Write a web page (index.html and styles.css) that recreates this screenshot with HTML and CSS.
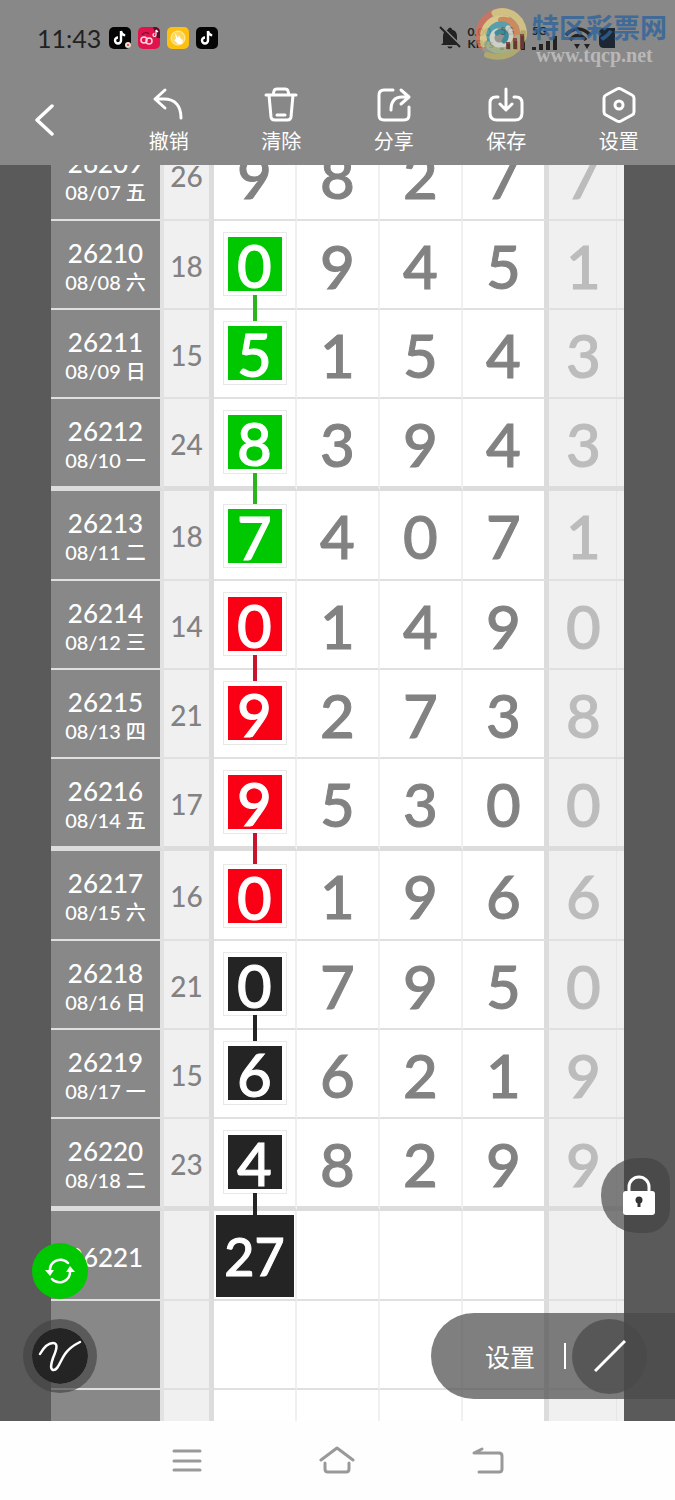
FILE: index.html
```html
<!DOCTYPE html>
<html lang="zh-CN">
<head>
    <meta charset="UTF-8">
    <meta name="viewport" content="width=device-width, initial-scale=1.0">
    <title>走势图</title>
    <link rel="stylesheet" href="styles.css">
</head>
<body>
    <header>
        <div class="status-bar">
            <span class="time">11:43</span>
            <div class="apps">
                <svg width="22" height="22" viewBox="0 0 22 22"><rect width="22" height="22" rx="5" fill="#050505"/><path d="M12 4v9.500a3 3 0 1 1-3-3M12 4c.4 2.500 2 4 4.200 4.200" fill="none" stroke="#fff" stroke-width="2.400"/><circle cx="19" cy="18" r="3" fill="#f3ddd0"/><circle cx="19" cy="18" r="1" fill="#c33"/></svg>
                <svg width="22" height="22" viewBox="0 0 22 22"><rect width="22" height="22" rx="5" fill="#e0134c"/><path d="M15 0h2a5 5 0 0 1 5 5v6h-3z" fill="#5d0d2a"/><circle cx="6" cy="13" r="3" fill="none" stroke="#ffd5df" stroke-width="1.500"/><circle cx="11" cy="14" r="3" fill="none" stroke="#ffd5df" stroke-width="1.500"/><path d="M4 8c2-3 5-3 7-1" fill="none" stroke="#8d0a34" stroke-width="1.500"/><path d="M18 3v5a1.500 1.500 0 1 1-1.500-1.500M18 3l2 2" fill="none" stroke="#fff" stroke-width="1.200"/></svg>
                <svg width="22" height="22" viewBox="0 0 22 22"><rect width="22" height="22" rx="5" fill="#fdc010"/><circle cx="11" cy="11" r="7" fill="#ffd65c" stroke="#fff0b0" stroke-width="1"/><path d="M8 6l3 5 1-3 2 4 2 1-1 4h-4l-4-4 2-1z" fill="#fff"/></svg>
                <svg width="22" height="22" viewBox="0 0 22 22"><rect width="22" height="22" rx="5" fill="#050505"/><path d="M12 4v9.500a3 3 0 1 1-3-3M12 4c.4 2.500 2 4 4.200 4.200" fill="none" stroke="#fff" stroke-width="2.400"/></svg>
            </div>
            <div class="signals">
                <svg width="22" height="24" viewBox="0 0 22 24"><path d="M4 17V10a7 7 0 0 1 5-6.500C9 1 13 1 13 3.500A7 7 0 0 1 18 10v7l2 2H2zM8.500 20.500h5a2.500 2 0 0 1-5 0z" fill="#222"/><path d="M2 0l20 20" stroke="#888" stroke-width="2"/><path d="M1 1l20 20" stroke="#222" stroke-width="2"/></svg>
                <span class="speed">0.00<br>KB/s</span>
                <span class="cell-signal">5G<svg width="26" height="14" viewBox="0 0 26 14"><path d="M2 14v-3M9 14V8M16 14V5M23 14V0" stroke="#222" stroke-width="4"/></svg></span>
                <span class="cell-signal">5G<svg width="26" height="14" viewBox="0 0 26 14"><path d="M2 14v-3M9 14V8M16 14V5M23 14V0" stroke="#222" stroke-width="4"/></svg></span>
                <svg width="28" height="24" viewBox="0 0 28 24"><path d="M2 9c7-8 17-8 24 0M6 14c5-6 11-6 16 0" fill="none" stroke="#222" stroke-width="3.500"/><path d="M10 18h6l-3 5zM20 18h6l-3 5z" fill="#222"/></svg>
                <svg width="17" height="24" viewBox="0 0 17 24"><path d="M17 2v20H6q-5 0-5-5V7q0-5 5-5z" fill="#1c2733"/></svg>
            </div>
            <div class="watermark">
                <svg width="52" height="54" viewBox="0 0 52 54">
                    <circle cx="26" cy="27" r="24" fill="#a9a596" fill-opacity=".6"/>
                    <g fill="none" stroke-linecap="round">
                        <path d="M6 38C-2 18 12 2 29 3" stroke="#d9705a" stroke-width="6"/>
                        <path d="M20 5c15-6 31 8 28 24" stroke="#e3cf82" stroke-width="7"/>
                        <path d="M48 25c0 17-17 28-36 22" stroke="#b9b267" stroke-width="6"/>
                        <path d="M9 36C6 18 18 8 31 11" stroke="#ecd98a" stroke-width="7"/>
                        <path d="M26 12c14-2 20 14 12 23" stroke="#e08a55" stroke-width="6"/>
                        <path d="M43 30c-4 12-21 17-31 6" stroke="#a8bb8a" stroke-width="7"/>
                        <path d="M15 31c-3-10 7-18 17-13" stroke="#4ba5b5" stroke-width="6"/>
                        <path d="M33 20c7 8 0 18-9 17s-9-12-2-14" stroke="#dfe3d6" stroke-width="5"/>
                        <path d="M22 25c6-5 13 2 7 8" stroke="#2f8c9e" stroke-width="5"/>
                    </g>
                    <path d="M33 41V34M40 41V30M47 41V26" stroke="#7e3b34" stroke-width="4"/>
                </svg>
                <div class="watermark-text">
                    <b>特区彩票网</b>
                    <span>www.tqcp.net</span>
                </div>
            </div>
        </div>
        <div class="toolbar">
            <button class="back" aria-label="返回">
                <svg width="20" height="32" viewBox="0 0 20 32"><path d="M17 2L2 16l15 14" fill="none" stroke="#fff" stroke-width="3.500" stroke-linecap="round" stroke-linejoin="round"/></svg>
            </button>
            <button>
                <svg class="icon" viewBox="0 0 36 36"><path d="M14 3L4 12l10 9M4 12h9c11 0 17 7 17 19" /></svg>
                撤销
            </button>
            <button>
                <svg class="icon" viewBox="0 0 36 36"><path d="M3 8h30M6 8l2 22q.5 3 3.500 3h13q3 0 3.500-3L30 8M10 8l1-4q.5-2 3-2h8q2.500 0 3 2l1 4M14 28h8"/></svg>
                清除
            </button>
            <button>
                <svg class="icon" viewBox="0 0 36 36"><path d="M17 3H8q-5 0-5 5v20q0 5 5 5h20q5 0 5-5v-8M15 23c0-8 3-13 11-13h6M25 3l8 7-8 7"/></svg>
                分享
            </button>
            <button>
                <svg class="icon" viewBox="0 0 36 36"><path d="M10 10H8q-6 0-6 6v10q0 7 7 7h18q7 0 7-7V16q0-6-6-6h-2M18 2v21M12 17l6 6 6-6"/></svg>
                保存
            </button>
            <button>
                <svg class="icon" viewBox="0 0 36 36"><path d="M16 2q2-1 4 0l11 6q2 1 2 3v14q0 2-2 3l-11 6q-2 1-4 0L5 28q-2-1-2-3V11q0-2 2-3z"/><circle cx="18" cy="18" r="4"/></svg>
                设置
            </button>
        </div>
    </header>

    <main>
        <table>
            <colgroup>
                <col class="col-issue">
                <col class="col-sum">
                <col class="col-num">
                <col class="col-num">
                <col class="col-num">
                <col class="col-num-end">
                <col class="col-tail">
            </colgroup>
            <tbody>
                <tr class="first"><th scope="row">26209<small>08/07 五</small></th><td class="sum">26</td><td>9</td><td>8</td><td>2</td><td class="last">7</td><td class="tail">7</td></tr>
                <tr><th scope="row">26210<small>08/08 六</small></th><td class="sum">18</td><td class="marked"><span class="mark green link">0</span></td><td>9</td><td>4</td><td class="last">5</td><td class="tail">1</td></tr>
                <tr><th scope="row">26211<small>08/09 日</small></th><td class="sum">15</td><td class="marked"><span class="mark green">5</span></td><td>1</td><td>5</td><td class="last">4</td><td class="tail">3</td></tr>
                <tr class="group-end"><th scope="row">26212<small>08/10 一</small></th><td class="sum">24</td><td class="marked"><span class="mark green link">8</span></td><td>3</td><td>9</td><td class="last">4</td><td class="tail">3</td></tr>
                <tr class="first"><th scope="row">26213<small>08/11 二</small></th><td class="sum">18</td><td class="marked"><span class="mark green">7</span></td><td>4</td><td>0</td><td class="last">7</td><td class="tail">1</td></tr>
                <tr><th scope="row">26214<small>08/12 三</small></th><td class="sum">14</td><td class="marked"><span class="mark red link">0</span></td><td>1</td><td>4</td><td class="last">9</td><td class="tail">0</td></tr>
                <tr><th scope="row">26215<small>08/13 四</small></th><td class="sum">21</td><td class="marked"><span class="mark red">9</span></td><td>2</td><td>7</td><td class="last">3</td><td class="tail">8</td></tr>
                <tr class="group-end"><th scope="row">26216<small>08/14 五</small></th><td class="sum">17</td><td class="marked"><span class="mark red link">9</span></td><td>5</td><td>3</td><td class="last">0</td><td class="tail">0</td></tr>
                <tr class="first"><th scope="row">26217<small>08/15 六</small></th><td class="sum">16</td><td class="marked"><span class="mark red">0</span></td><td>1</td><td>9</td><td class="last">6</td><td class="tail">6</td></tr>
                <tr><th scope="row">26218<small>08/16 日</small></th><td class="sum">21</td><td class="marked"><span class="mark black link">0</span></td><td>7</td><td>9</td><td class="last">5</td><td class="tail">0</td></tr>
                <tr><th scope="row">26219<small>08/17 一</small></th><td class="sum">15</td><td class="marked"><span class="mark black">6</span></td><td>6</td><td>2</td><td class="last">1</td><td class="tail">9</td></tr>
                <tr class="group-end"><th scope="row">26220<small>08/18 二</small></th><td class="sum">23</td><td class="marked"><span class="mark black link to-pick">4</span></td><td>8</td><td>2</td><td class="last">9</td><td class="tail">9</td></tr>
                <tr class="first"><th scope="row">26221</th><td class="sum"></td><td><span class="pick">27</span></td><td></td><td></td><td class="last"></td><td class="tail"></td></tr>
                <tr><th></th><td class="sum"></td><td></td><td></td><td></td><td class="last"></td><td class="tail"></td></tr>
                <tr><th></th><td class="sum"></td><td></td><td></td><td></td><td class="last"></td><td class="tail"></td></tr>
            </tbody>
        </table>

        <button class="float lock" aria-label="锁定">
            <svg width="34" height="42" viewBox="0 0 34 42"><path d="M7 17v-5a10 10 0 0 1 20 0v5" fill="none" stroke="#fff" stroke-width="3"/><rect x="1" y="16" width="32" height="24" rx="3" fill="#fff"/><circle cx="17" cy="25" r="3.500" fill="#333"/><path d="M17 25v7" stroke="#333" stroke-width="3"/></svg>
        </button>
        <button class="float refresh" aria-label="刷新">
            <svg width="30" height="26" viewBox="0 0 30 26"><path d="M5 13A10.500 10.500 0 0 1 23 5M25 13A10.500 10.500 0 0 1 7 21" fill="none" stroke="#fff" stroke-width="2.500" stroke-linecap="round"/><path d="M0 12h9l-4 6zM21 14h9l-5-6z" fill="#fff"/></svg>
        </button>
        <button class="float pen" aria-label="画笔">
            <svg width="44" height="32" viewBox="0 0 44 32"><path d="M2 14C6 7 11 3 15 3c6 0 3 8 0 15-2 6-3 11 0 12 5 1 7-9 12-16C31 8 36 5 42 2" fill="none" stroke="#fff" stroke-width="2.500" stroke-linecap="round"/></svg>
        </button>
        <div class="float draw-bar">
            <button class="draw-settings">设置</button>
            <span class="divider"></span>
            <button class="line-tool" aria-label="直线">
                <svg width="32" height="32" viewBox="0 0 32 32"><path d="M1 31L31 1" stroke="#fff" stroke-width="3"/></svg>
            </button>
        </div>
    </main>

    <nav>
        <button aria-label="菜单"><svg width="36" height="32" viewBox="0 0 36 32"><path d="M5 6h26M5 16h26M5 25h26"/></svg></button>
        <button aria-label="主页"><svg width="36" height="32" viewBox="0 0 36 32"><path d="M2 15L18 3l16 12M6 18v6q0 3 3 3h18q3 0 3-3v-6"/></svg></button>
        <button aria-label="返回"><svg width="36" height="32" viewBox="0 0 36 32"><path d="M12 4L4 8h25q3 0 3 3v13q0 3-3 3H9"/></svg></button>
    </nav>
</body>
</html>
```
FILE: styles.css
```css
* {
    box-sizing: border-box;
}
body {
    margin: 0;
    height: 100vh;
    display: flex;
    flex-direction: column;
    background-color: #5a5a5a;
    font-family: Lato, "Noto Sans CJK SC", sans-serif;
    overflow: hidden;
}
button {
    border: none;
    padding: 0;
    background: none;
    color: #fff;
    font-family: inherit;
    cursor: pointer;
}

/* header */
header {
    flex: none;
    background-color: #888;
}
.status-bar {
    position: relative;
    display: flex;
    align-items: center;
    height: 75px;
    padding: 0 60px 0 37px;
    color: #222;
}
.time {
    font-size: 25px;
}
.apps {
    display: flex;
    gap: 7px;
    margin-left: 8px;
}
.signals {
    display: flex;
    align-items: center;
    gap: 6px;
    margin-left: auto;
}
.speed {
    font-size: 12px;
    line-height: 12px;
    font-weight: bold;
}
.cell-signal {
    display: flex;
    flex-direction: column;
    font-size: 11px;
    line-height: 10px;
    font-weight: bold;
}
.watermark {
    position: absolute;
    top: 8px;
    right: 8px;
    display: flex;
    gap: 5px;
    opacity: 0.8;
}
.watermark-text {
    display: flex;
    flex-direction: column;
}
.watermark-text b {
    font-size: 27px;
    line-height: 36px;
    padding-top: 2px;
    color: #2f649c;
}
.watermark-text span {
    padding-left: 4px;
    font: bold 20px/18px "Liberation Serif", serif;
    color: #c4c4c4;
}
.toolbar {
    display: grid;
    grid-template-columns: repeat(6, 1fr);
    height: 90px;
}
.toolbar button {
    display: flex;
    flex-direction: column;
    align-items: center;
    gap: 4px;
    padding-top: 12px;
    font-size: 20px;
    line-height: 28px;
}
.toolbar .back {
    align-items: flex-start;
    justify-content: center;
    padding: 0 0 0 35px;
}
.icon {
    width: 36px;
    height: 36px;
    fill: none;
    stroke: #fff;
    stroke-width: 3;
    stroke-linecap: round;
    stroke-linejoin: round;
}

/* chart */
main {
    position: relative;
    flex: 1;
    min-height: 0;
    overflow: hidden;
    padding: 0 51px;
}
table {
    width: 100%;
    margin-top: -34px;
    table-layout: fixed;
    border-collapse: separate;
    border-spacing: 0;
    background-color: #fff;
}
.col-issue {
    width: 113px;
}
.col-sum {
    width: 50px;
}
.col-num {
    width: 83px;
}
.col-num-end {
    width: 86px;
}
.col-tail {
    width: 75px;
}
tr {
    height: 89px;
}
tr.first {
    height: 90px;
}
tr.group-end {
    height: 92px;
}
th,
td {
    padding: 2px 0 0;
    text-align: center;
    vertical-align: middle;
    border-bottom: 2px solid #e0e0e0;
}
.group-end th,
.group-end td {
    border-bottom: 5px solid #dcdcdc;
}
th {
    padding-top: 4px;
    background-color: #888;
    border-right: 4px solid #e2e2e2;
    color: #fff;
    font-size: 26px;
    line-height: 30px;
    font-weight: 500;
}
th small {
    display: block;
    font-size: 20px;
    line-height: 28px;
    font-weight: 500;
}
td {
    border-right: 2px solid #f0f0f0;
    color: #828282;
    font-size: 60px;
    line-height: 64px;
    font-weight: 500;
    -webkit-text-stroke: 1px;
}
.sum {
    background-color: #f0f0f0;
    border-right: 5px solid #dcdcdc;
    font-size: 28px;
    -webkit-text-stroke: 0;
}
.last {
    border-right: 5px solid #dcdcdc;
}
.tail {
    padding-right: 6px;
    background-color: #f0f0f0;
    border-right: none;
    box-shadow: inset -7px 0 #f0f0f0, inset -8px 0 #e6e6e6;
    color: #bcbcbc;
}
.marked {
    padding: 0 0 2px;
}
.first .marked {
    padding: 2px 0 0;
}
.mark {
    position: relative;
    display: block;
    width: 64px;
    height: 64px;
    margin: 0 auto;
    padding: 4px;
    border: 1px solid #e8e8e8;
    background-clip: content-box;
    color: #fff;
    line-height: 56px;
}
.green {
    background-color: #00c800;
}
.red {
    background-color: #fa0014;
}
.black,
.pick {
    background-color: #242424;
}
/* stroke that joins a mark to the one in the next row */
.link::after {
    content: "";
    position: absolute;
    top: 100%;
    left: 50%;
    width: 4px;
    height: 26px;
    margin-left: -2px;
    background-color: #2cb41c;
}
.red.link::after {
    background-color: #c8142c;
}
.black.link::after {
    background-color: #242424;
}
.group-end .link::after {
    height: 32px;
}
.group-end .to-pick::after {
    height: 25px;
}
.pick {
    display: block;
    width: 78px;
    height: 82px;
    margin: 0 auto;
    color: #fff;
    font-size: 52px;
    line-height: 82px;
}

/* floating tools */
.float {
    position: absolute;
    display: flex;
    align-items: center;
    justify-content: center;
}
.lock {
    right: 5px;
    bottom: 188px;
    width: 69px;
    height: 75px;
    padding-left: 6px;
    border-radius: 37px 24px 24px 37px;
    background-color: rgba(67, 67, 67, 0.67);
}
.refresh {
    left: 32px;
    bottom: 122px;
    width: 56px;
    height: 56px;
    border-radius: 50%;
    background-color: #00c800;
}
.pen {
    left: 23px;
    bottom: 28px;
    width: 74px;
    height: 74px;
    border: 9px solid rgba(67, 67, 67, 0.67);
    border-radius: 50%;
    background-color: #242424;
    background-clip: padding-box;
}
.draw-bar {
    right: 0;
    bottom: 22px;
    width: 244px;
    height: 86px;
    padding-right: 28px;
    justify-content: flex-end;
    border-radius: 43px 0 0 43px;
    background-color: rgba(73, 73, 73, 0.7);
}
.draw-settings {
    font-size: 25px;
}
.divider {
    width: 2px;
    height: 26px;
    margin: 0 6px 0 29px;
    background-color: #fff;
}
.line-tool {
    display: flex;
    align-items: center;
    justify-content: center;
    width: 75px;
    height: 75px;
    border-radius: 50%;
    background-color: rgba(73, 73, 73, 0.7);
}

/* system navigation */
nav {
    flex: none;
    display: grid;
    grid-template-columns: repeat(3, 1fr);
    height: 79px;
    padding: 4px 112px 0;
    background-color: #fefefe;
}
nav svg {
    fill: none;
    stroke: #999;
    stroke-width: 3;
    stroke-linecap: round;
    stroke-linejoin: round;
}
```
